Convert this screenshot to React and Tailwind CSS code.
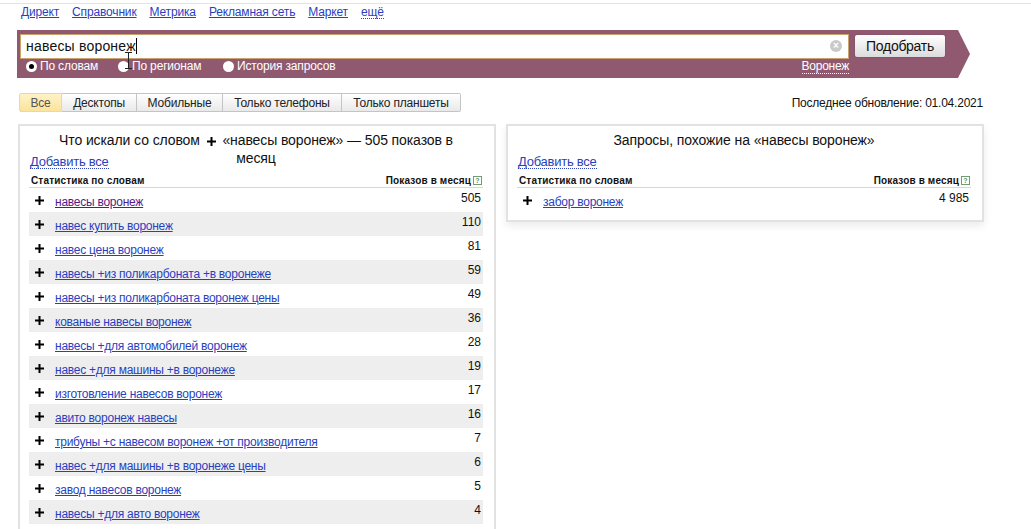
import React from "react";

const nav = ["Директ", "Справочник", "Метрика", "Рекламная сеть", "Маркет"];
const tabs = [
  ["Десктопы", "w-[75px]"],
  ["Мобильные", "w-[86px]"],
  ["Только телефоны", "w-[119px]"],
  ["Только планшеты", "w-[119px]"],
];
const rows = [
  ["навесы воронеж", "505", true],
  ["навес купить воронеж", "110"],
  ["навес цена воронеж", "81"],
  ["навесы +из поликарбоната +в воронеже", "59"],
  ["навесы +из поликарбоната воронеж цены", "49"],
  ["кованые навесы воронеж", "36"],
  ["навесы +для автомобилей воронеж", "28"],
  ["навес +для машины +в воронеже", "19"],
  ["изготовление навесов воронеж", "17"],
  ["авито воронеж навесы", "16"],
  ["трибуны +с навесом воронеж +от производителя", "7"],
  ["навес +для машины +в воронеже цены", "6"],
  ["завод навесов воронеж", "5"],
  ["навесы +для авто воронеж", "4"],
];

function Plus({ className = "" }) {
  return (
    <svg width="9" height="9" viewBox="0 0 9 9" className={className}>
      <path d="M3.5 0h2v3.5H9v2H5.5V9h-2V5.5H0v-2h3.5z" fill="#000" />
    </svg>
  );
}

function Radio({ label, checked, className = "" }) {
  return (
    <div className={`flex items-center gap-[3px] ${className}`}>
      <span className="flex h-[11px] w-[11px] items-center justify-center rounded-full bg-white">
        {checked && <span className="h-[5px] w-[5px] rounded-full bg-black" />}
      </span>
      <span className="tracking-[-0.17px]">{label}</span>
    </div>
  );
}

function StatHead() {
  return (
    <div className="flex h-[15px] items-center justify-between border-b border-[#d5d5dd] pl-[2px] pr-[1px] text-[10px] font-bold tracking-[0.15px] text-[#111]">
      <span>Статистика по словам</span>
      <span className="flex items-center gap-[2px]">
        Показов в месяц
        <span className="flex h-[9px] w-[9px] items-center justify-center border border-[#6f9f6f] text-[7px] leading-none text-[#5f8f5f]">?</span>
      </span>
    </div>
  );
}

function Row({ text, value, visited, odd }) {
  return (
    <div className={`flex h-6 items-start justify-between pr-[2px] text-xs ${odd ? "bg-[#eeeeee]" : "bg-white"}`}>
      <div className="flex items-start">
        <Plus className="ml-[6px] mt-[8px]" />
        <a className={`ml-[11px] mt-[6px] tracking-[-0.25px] underline ${visited ? "text-[#551a8b]" : "text-[#2a3fc0]"}`}>{text}</a>
      </div>
      <span className="mt-[2px] text-[#111]">{value}</span>
    </div>
  );
}

function AddAll() {
  return (
    <a className="block w-fit border-b border-dotted border-[#2a3fc0] text-[13px] leading-[13px] tracking-[-0.25px] text-[#2a3fc0]">Добавить все</a>
  );
}

export default function App() {
  return (
    <div className="relative h-[529px] w-[1031px] overflow-hidden bg-white font-['Liberation_Sans',Arial,sans-serif] text-[#111]">
      <div className="h-[4px] border-b border-[#e4e4e4]" />

      {/* top links */}
      <div className="ml-[21px] mt-[1px] flex h-[14px] items-center gap-[13px] text-xs leading-[14px] tracking-[-0.16px] text-[#2a3fc0]">
        {nav.map((n) => (
          <a key={n} className="underline">{n}</a>
        ))}
        <a className="border-b border-dotted border-[#2a3fc0] leading-[12px]">ещё</a>
      </div>

      {/* search bar */}
      <div className="ml-[17px] mt-[11px] flex h-[48px] w-[953px]">
        <div className="flex w-[941px] justify-between bg-[#90596f] pl-[3px] pr-[13px] pt-[4px]">
          <div className="w-[829px]">
            <div className="flex h-[25px] items-center justify-between border border-[#c9a26d] bg-white pb-[2px] pl-[5px] pr-[6px]">
              <div className="flex items-center text-sm tracking-[0.2px] text-[#111]">
                навесы воронеж<span className="h-[16px] w-px bg-black" />
              </div>
              <span className="flex h-3 w-3 items-center justify-center rounded-full bg-[#c9c9c9] text-[10px] font-bold leading-none text-white">×</span>
            </div>
            <div className="-mt-[1px] flex items-center justify-between text-xs leading-[16px] text-white">
              <div className="ml-[6px] flex">
                <Radio label="По словам" checked className="w-[92px]" />
                <Radio label="По регионам" className="w-[105px]" />
                <Radio label="История запросов" />
              </div>
              <a className="mt-[1px] border-b border-dotted border-white leading-[13px] tracking-[-0.25px]">Воронеж</a>
            </div>
          </div>
          <button className="mt-px h-[22px] w-[90px] rounded-[2px] bg-gradient-to-b from-white to-[#dcdcdc] text-sm leading-none tracking-[-0.3px] text-[#111] shadow-[0_0_1px_rgba(0,0,0,0.5)]">Подобрать</button>
        </div>
        <svg width="12" height="48" viewBox="0 0 12 48">
          <path d="M0 0L12 24L0 48z" fill="#90596f" />
        </svg>
      </div>

      {/* device tabs */}
      <div className="ml-[19px] mr-[48px] mt-[15px] flex h-[19px] items-center justify-between">
        <div className="flex h-[19px] text-xs leading-[18px] tracking-[-0.2px]">
          <div className="w-[43px] rounded-l-[2px] border border-[#e6d8a8] bg-gradient-to-b from-[#fff2c4] to-[#fbe39c] text-center text-[#555]">Все</div>
          {tabs.map(([t, w]) => (
            <div key={t} className={`border-b border-r border-t border-[#c4c4c4] bg-gradient-to-b from-white to-[#e9e9e9] text-center text-[#222] last:rounded-r-[2px] ${w}`}>{t}</div>
          ))}
        </div>
        <span className="text-xs tracking-[-0.22px]">Последнее обновление: 01.04.2021</span>
      </div>

      {/* panels */}
      <div className="ml-[18px] mt-[12px] flex items-start gap-[10px]">
        <div className="h-[420px] w-[478px] border-2 border-[#e2e2e2] bg-white pl-[9px] pr-[11px] pt-[5px]">
          <div className="px-[20px] text-center text-sm leading-[18px] tracking-[-0.1px]">
            Что искали со словом <Plus className="mx-[3px] inline align-[-1px]" /> «навесы воронеж» — 505 показов в месяц
          </div>
          <div className="-mt-[12px] ml-px">
            <AddAll />
          </div>
          <div className="mt-[4px]">
            <StatHead />
          </div>
          {rows.map((r, i) => (
            <Row key={r[0]} text={r[0]} value={r[1]} visited={r[2]} odd={i % 2 === 1} />
          ))}
        </div>

        <div className="h-[98px] w-[478px] border-2 border-[#e2e2e2] bg-white pl-[9px] pr-[11px] pt-[5px] shadow-[0_4px_8px_rgba(0,0,0,0.08)]">
          <div className="text-center text-sm leading-[18px] tracking-[-0.1px]">Запросы, похожие на «навесы воронеж»</div>
          <div className="ml-px mt-[6px]">
            <AddAll />
          </div>
          <div className="mt-[4px]">
            <StatHead />
          </div>
          <Row text="забор воронеж" value="4 985" />
        </div>
      </div>

      {/* text-selection mouse pointer caught in the screenshot */}
      <svg width="8" height="18" viewBox="0 0 8 18" className="absolute left-[125px] top-[52px]">
        <path d="M0 .5h7M0 16.5h7M3.5 .5v16" stroke="#222" strokeWidth="1" fill="none" />
      </svg>
    </div>
  );
}
